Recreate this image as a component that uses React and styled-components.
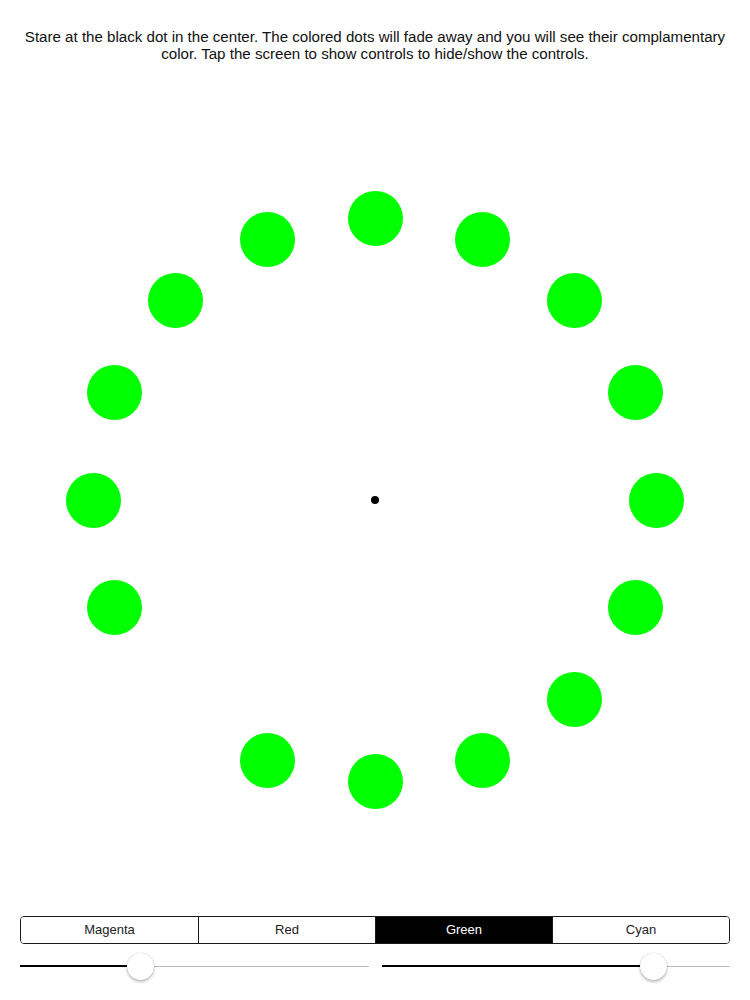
import React from "react";
import styled, { createGlobalStyle } from "styled-components";

const Global = createGlobalStyle`
  html, body { margin: 0; padding: 0; background: #fff; }
  body { font-family: "Liberation Sans", Arial, sans-serif; }
`;

const Page = styled.div`
  width: 750px;
  height: 1000px;
  display: flex;
  flex-direction: column;
  background: #fff;
  overflow: hidden;
`;

const Header = styled.div`
  height: 100px;
  box-sizing: border-box;
  padding: 28px 10px 0;
  text-align: center;
  font-size: 15.1px;
  line-height: 17px;
  color: #111;
`;

const Canvas = styled.div`
  position: relative;
  height: 800px;
`;

const Dot = styled.div`
  position: absolute;
  width: ${(p) => p.size}px;
  height: ${(p) => p.size}px;
  margin-left: ${(p) => -p.size / 2}px;
  margin-top: ${(p) => -p.size / 2}px;
  border-radius: 50%;
  background: ${(p) => p.color};
`;

const Controls = styled.div`
  margin-top: 16px;
  padding: 0 20px;
  display: flex;
  flex-direction: column;
  gap: 8px;
`;

const Segmented = styled.div`
  display: grid;
  grid-template-columns: repeat(4, 1fr);
  height: 28px;
  box-sizing: border-box;
  border: 1px solid #1a1a1a;
  border-radius: 4px;
  overflow: hidden;
`;

const Segment = styled.div`
  display: flex;
  align-items: center;
  justify-content: center;
  padding-bottom: 2px;
  font-size: 13px;
  color: ${(p) => (p.active ? "#fff" : "#222")};
  background: ${(p) => (p.active ? "#000" : "#fff")};
  & + & {
    border-left: 1px solid #1a1a1a;
  }
`;

const SliderRow = styled.div`
  display: flex;
  gap: 13px;
`;

const Slider = styled.div`
  position: relative;
  flex: 1;
  height: 28px;
`;

const TrackGray = styled.div`
  position: absolute;
  left: 0;
  right: 0;
  top: 14px;
  height: 1px;
  background: #b8b8b8;
`;

const TrackFill = styled.div`
  position: absolute;
  left: 0;
  top: 13px;
  height: 2px;
  background: #000;
`;

const Thumb = styled.div`
  position: absolute;
  top: 1px;
  width: 27px;
  height: 27px;
  margin-left: -13.5px;
  border-radius: 50%;
  background: #fff;
  box-shadow: 0 2px 3px rgba(0, 0, 0, 0.25), 0 0 1px rgba(0, 0, 0, 0.3);
`;

const cx = 375;
const cy = 400;
const R = 281.5;
const dots = Array.from({ length: 16 }, (_, i) => i).filter((i) => i !== 10);

function SliderControl({ pos }) {
  return (
    <Slider>
      <TrackGray />
      <TrackFill style={{ width: pos }} />
      <Thumb style={{ left: pos }} />
    </Slider>
  );
}

export default function App() {
  const segments = ["Magenta", "Red", "Green", "Cyan"];
  return (
    <Page>
      <Global />
      <Header>
        Stare at the black dot in the center. The colored dots will fade away and you will see their complamentary
        <br />
        color. Tap the screen to show controls to hide/show the controls.
      </Header>
      <Canvas>
        {dots.map((i) => {
          const a = (i * Math.PI) / 8;
          return (
            <Dot
              key={i}
              size={55}
              color="#00ff00"
              style={{ left: cx + R * Math.sin(a), top: cy - R * Math.cos(a) }}
            />
          );
        })}
        <Dot size={8} color="#000" style={{ left: cx, top: cy }} />
      </Canvas>
      <Controls>
        <Segmented>
          {segments.map((s) => (
            <Segment key={s} active={s === "Green"}>
              {s}
            </Segment>
          ))}
        </Segmented>
        <SliderRow>
          <SliderControl pos={120} />
          <SliderControl pos={272} />
        </SliderRow>
      </Controls>
    </Page>
  );
}
